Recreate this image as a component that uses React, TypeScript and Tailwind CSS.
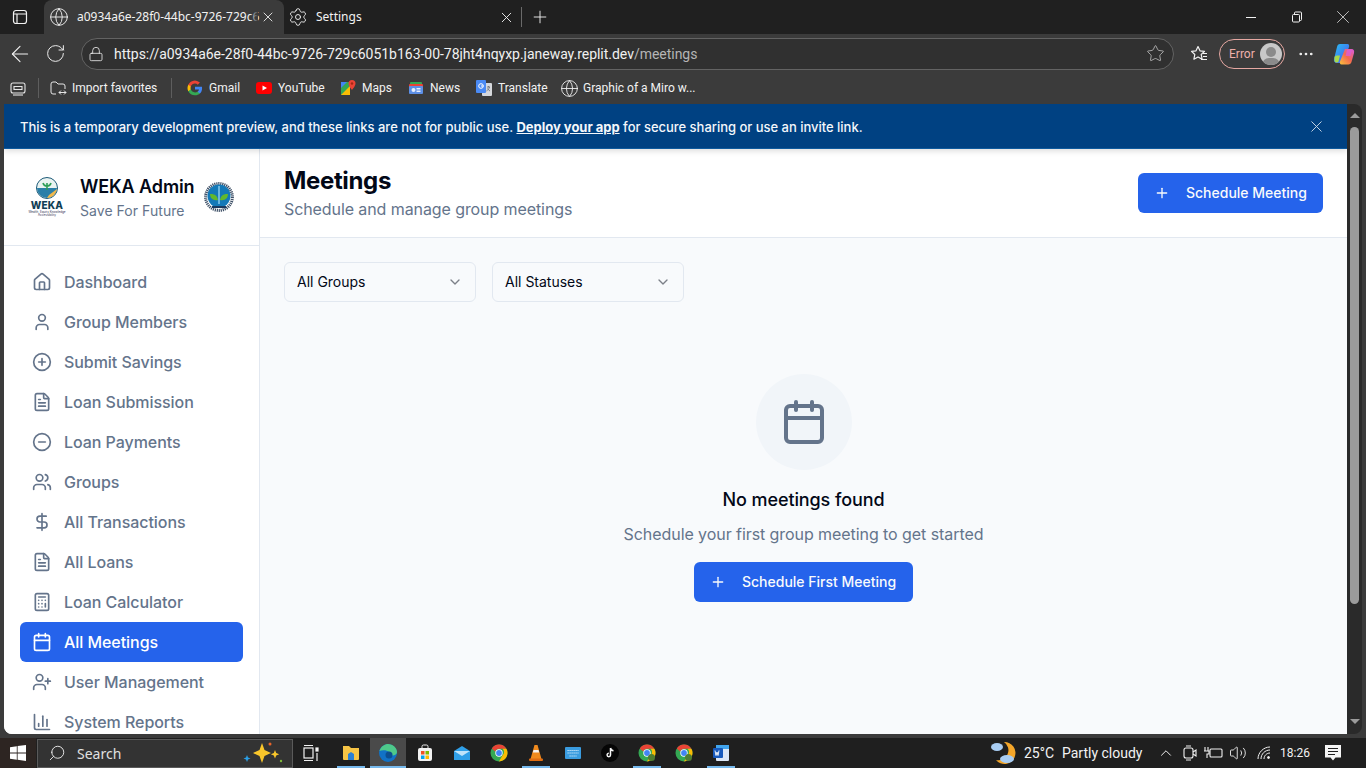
import React from 'react';
import {
  ArrowLeft, BarChart3, Calculator, Calendar, ChevronDown, ChevronUp, DollarSign, FileText, Globe, Home,
  Lock, MinusCircle, MoreHorizontal, Plus, PlusCircle, RotateCw, Search, Settings, Star, User,
  UserPlus, Users, Volume2, X,
} from 'lucide-react';

const navItems = [
  { label: 'Dashboard', icon: Home },
  { label: 'Group Members', icon: User },
  { label: 'Submit Savings', icon: PlusCircle },
  { label: 'Loan Submission', icon: FileText },
  { label: 'Loan Payments', icon: MinusCircle },
  { label: 'Groups', icon: Users },
  { label: 'All Transactions', icon: DollarSign },
  { label: 'All Loans', icon: FileText },
  { label: 'Loan Calculator', icon: Calculator },
  { label: 'All Meetings', icon: Calendar, active: true },
  { label: 'User Management', icon: UserPlus },
  { label: 'System Reports', icon: BarChart3 },
];

const GoogleIcon = () => (
  <svg width="16" height="16" viewBox="0 0 24 24">
    <path fill="#4285F4" d="M22.6 12.2c0-.8-.1-1.500-.2-2.200H12v4.200h6a5 5 0 0 1-2.200 3.300v2.800h3.600c2.100-1.900 3.200-4.800 3.200-8.100z" />
    <path fill="#34A853" d="M12 23c3 0 5.500-1 7.400-2.700l-3.600-2.800c-1 .7-2.300 1.100-3.800 1.100-2.900 0-5.400-2-6.300-4.600H2v2.900A11 11 0 0 0 12 23z" />
    <path fill="#FBBC05" d="M5.700 14a6.600 6.600 0 0 1 0-4.200V7H2a11 11 0 0 0 0 10z" />
    <path fill="#EA4335" d="M12 5.400c1.600 0 3.100.6 4.200 1.700l3.200-3.200A11 11 0 0 0 2 7l3.700 2.900C6.600 7.300 9.100 5.400 12 5.400z" />
  </svg>
);

const YouTubeIcon = () => (
  <svg width="16" height="16" viewBox="0 0 16 16">
    <rect x="0" y="2" width="16" height="12" rx="3" fill="#f00" />
    <path d="M6.500 5.500v5L11 8z" fill="#fff" />
  </svg>
);

const MapsIcon = () => (
  <svg width="16" height="16" viewBox="0 0 16 16">
    <path d="M1 2h9v13H1z" fill="#34a853" />
    <path d="M1 15l9-9v9z" fill="#fbbc04" />
    <path d="M1 2h6L1 8z" fill="#4285f4" />
    <path d="M12 0a3.500 3.500 0 0 1 3.500 3.500C15.500 6 12 10 12 10S8.500 6 8.500 3.500A3.500 3.500 0 0 1 12 0z" fill="#ea4335" />
    <circle cx="12" cy="3.500" r="1.200" fill="#a52714" />
  </svg>
);

const NewsIcon = () => (
  <svg width="16" height="16" viewBox="0 0 16 16">
    <rect x="2" y="2" width="12" height="5" rx="1" fill="#34a853" />
    <rect x="1" y="4" width="14" height="4" rx="1" fill="#ea4335" />
    <rect x="1" y="6" width="14" height="8" rx="1" fill="#5c8fe6" />
    <rect x="8.500" y="8" width="4" height="1.500" fill="#e8eefc" />
    <rect x="8.500" y="10.500" width="4" height="1.500" fill="#e8eefc" />
    <circle cx="5.500" cy="10" r="2" fill="#e8eefc" />
  </svg>
);

const TranslateIcon = () => (
  <svg width="16" height="18" viewBox="0 0 16 18">
    <rect x="6" y="4" width="10" height="13" rx="1" fill="#d5d7db" />
    <path d="M11 8h3M12.500 7v1M13.500 8c-.5 2-2 3.500-3 4M11.500 9.500c.5 1 1.500 2 2.500 2.500" stroke="#70757a" strokeWidth="0.900" fill="none" />
    <rect x="0" y="1" width="10" height="13" rx="1" fill="#4a8af4" />
    <circle cx="5" cy="7" r="2.300" fill="none" stroke="#fff" strokeWidth="1" />
    <path d="M5 7h2.400" stroke="#fff" strokeWidth="1" />
  </svg>
);

const CollectionsIcon = () => (
  <svg width="18" height="18" viewBox="0 0 18 18" fill="none" stroke="#e6e6e6" strokeWidth="1.100">
    <rect x="2" y="4" width="14" height="10" rx="2" />
    <path d="M5 7.500h8v3H5z" />
    <path d="M4 16h10" />
  </svg>
);

const ImportIcon = () => (
  <svg width="18" height="18" viewBox="0 0 18 18" fill="none" stroke="#e6e6e6" strokeWidth="1">
    <path d="M7 15H4a2 2 0 0 1-2-2V5a2 2 0 0 1 2-2h3l2 2h5a2 2 0 0 1 2 2v3" />
    <path d="M10 13.500h7M15 11.500l2 2-2 2M12 11.500l-2 2 2 2" />
  </svg>
);

const SidebarToggleIcon = () => (
  <svg width="16" height="16" viewBox="0 0 16 16" fill="none" stroke="#f2f2f2" strokeWidth="1.200">
    <rect x="1.500" y="1.500" width="13" height="13" rx="2.500" />
    <path d="M1.500 5h13M5 5v9.500" />
  </svg>
);

const FavoritesIcon = () => (
  <svg width="20" height="20" viewBox="0 0 20 20" fill="none" stroke="#f2f2f2" strokeWidth="1.200" strokeLinejoin="round">
    <path d="M9 2.500l2 4.300 4.500.6-3.300 3.100.9 4.700L9 12.900l-4.100 2.300.9-4.700L2.500 7.400 7 6.800z" />
    <path d="M14 9.500h4M14 12.500h4M12 15.500h6" />
  </svg>
);

const CopilotIcon = () => (
  <svg width="24" height="24" viewBox="0 0 24 24">
    <defs>
      <linearGradient id="copilotA" x1="0" y1="0" x2="1" y2="1">
        <stop offset="0" stopColor="#27c3f3" />
        <stop offset="0.600" stopColor="#3f7cf0" />
        <stop offset="1" stopColor="#9a5cf0" />
      </linearGradient>
      <linearGradient id="copilotB" x1="0" y1="1" x2="1" y2="0">
        <stop offset="0" stopColor="#f9c33c" />
        <stop offset="0.500" stopColor="#f4684f" />
        <stop offset="1" stopColor="#d95be0" />
      </linearGradient>
    </defs>
    <path d="M8 2h7.500c1.500 0 2 1.500 1.500 3l-4.500 13c-.6 1.800-1.700 3-3.500 3H5c-2.500 0-3.500-2-3-4L5 5c.4-1.800 1.400-3 3-3z" fill="url(#copilotA)" />
    <path d="M2.500 15.500c0-1 1-2 2.500-2h3l-1.500 6c-.5 1.500-4 1.500-4-1z" fill="#a8d84a" />
    <path d="M13 7h6.500c2.300 0 3 2 2.500 4l-2.500 9c-.5 1.500-1.500 2.500-3.200 2.500H9.500c-1.500 0-2-1.500-1.500-3z" fill="url(#copilotB)" />
    <path d="M15 8h5l-1.500 6h-5z" fill="#d95be0" opacity="0.700" />
  </svg>
);

const WekaLogo = () => (
  <div className="flex w-[36px] shrink-0 flex-col items-center">
    <svg width="22" height="22" viewBox="0 0 22 22">
      <circle cx="11" cy="11" r="10.500" fill="#eaf3f1" stroke="#1d5a78" strokeWidth="1" />
      <path d="M1 11h20a10 10 0 0 1-20 0z" fill="#2a7fa8" />
      <path d="M11 21c5 0 9-4 10-9l-8 6z" fill="#f2b84b" />
      <path d="M11 13V6M11 9C9 9 7.500 8 7 6M11 9c2 0 3.500-1 4-3" stroke="#2f9e58" strokeWidth="1.600" fill="none" />
    </svg>
    <span className="mt-[1px] font-['Inter',sans-serif] text-[10px] leading-[10px] font-extrabold tracking-[0.2px] text-[#123f55]">WEKA</span>
    <span className="mt-[1px] font-['Inter',sans-serif] text-[3px] leading-[3px] whitespace-nowrap text-[#335]">Wealth, Equity Knowledge</span>
    <span className="font-['Inter',sans-serif] text-[3px] leading-[3px] whitespace-nowrap text-[#335]">Accessibility</span>
  </div>
);

const SealLogo = () => (
  <svg width="30" height="30" viewBox="0 0 30 30" className="shrink-0">
    <circle cx="15" cy="15" r="13.400" fill="none" stroke="#3d4f66" strokeWidth="3" strokeDasharray="1.200 0.800" />
    <circle cx="15" cy="14" r="11.500" fill="#1479b8" />
    <path d="M15 4v18" stroke="#8ed0ef" strokeWidth="1.400" />
    <path d="M14 18c-.5-4.500-4-6.500-8-6 0 4.500 3.500 7 8 6z" fill="#62b82c" />
    <path d="M16 18c.5-4.500 4-6.500 8-6 0 4.500-3.500 7-8 6z" fill="#62b82c" />
    <path d="M8 25h14" stroke="#1a3a60" strokeWidth="2" />
  </svg>
);

const Bookmark = ({ icon, label, width, textMl = 'ml-[6px]' }: { icon: React.ReactNode; label: string; width: string; textMl?: string }) => (
  <div className={`flex items-center ${width}`}>
    {icon}
    <span className={`${textMl} whitespace-nowrap font-['Roboto',sans-serif] text-[12px] text-[#f2f2f2]`}>{label}</span>
  </div>
);

const TaskbarIcon = ({ children, running, active }: { children: React.ReactNode; running?: boolean; active?: boolean }) => (
  <div className={`relative flex h-[30px] w-[36px] items-center justify-center ${active ? 'bg-[#4a4a4a]' : ''}`}>
    {children}
    {running && <div className={`absolute bottom-0 h-[2px] bg-[#76b9ed] ${active ? 'inset-x-0' : 'inset-x-[4px]'}`} />}
  </div>
);

const ChromeIcon = ({ badge }: { badge?: boolean }) => (
  <svg width="18" height="18" viewBox="0 0 18 18">
    <circle cx="9" cy="9" r="8.500" fill="#34a853" />
    <path d="M9 .5a8.500 8.500 0 0 1 7.400 4.300H9a4.200 4.200 0 0 0-3.900 2.700L1.800 4.500A8.500 8.500 0 0 1 9 .5z" fill="#ea4335" />
    <path d="M16.400 4.800A8.500 8.500 0 0 1 9 17.500l3.600-6.300a4.200 4.200 0 0 0 0-6.400z" fill="#fbbc04" />
    <circle cx="9" cy="9" r="3.700" fill="#fff" />
    <circle cx="9" cy="9" r="2.900" fill="#4285f4" />
    {badge && <circle cx="13.500" cy="13.500" r="3.500" fill="#4f7d32" />}
  </svg>
);

const App: React.FC = () => {
  return (
    <div className="flex h-[768px] w-[1366px] flex-col overflow-hidden bg-[#3b3b3b] font-['Noto_Sans',sans-serif]">
      {/* tab strip */}
      <div className="flex h-[34px] shrink-0 items-center bg-[#202020] text-[#f2f2f2]">
        <div className="ml-[12px] w-[32px]"><SidebarToggleIcon /></div>
        <div className="flex h-full w-[240px] items-center rounded-t-[8px] bg-[#3b3b3b] pr-[8px] pl-[5px]">
          <Globe size={20} strokeWidth={1.1} />
          <div className="relative ml-[8px] flex w-[181px] items-center">
            <span className="text-[12px] whitespace-nowrap">a0934a6e-28f0-44bc-9726-729c6</span>
            <div className="absolute top-0 right-0 h-full w-[8px] bg-gradient-to-r from-transparent to-[#3b3b3b]" />
          </div>
          <X size={16} strokeWidth={1.3} className="ml-[2px]" />
        </div>
        <div className="flex h-full w-[238px] items-center pl-[4px]">
          <Settings size={20} strokeWidth={1.1} />
          <span className="ml-[8px] flex-1 text-[12px]">Settings</span>
          <X size={17} strokeWidth={1.3} className="-mr-[2px]" />
          <div className="ml-[8px] h-[20px] w-px bg-[#6a6a6a]" />
        </div>
        <Plus size={20} strokeWidth={1.1} className="ml-[8px]" />
        <div className="ml-auto flex items-center">
          <div className="mr-[35px] h-px w-[10px] bg-[#f2f2f2]" />
          <svg width="12" height="12" viewBox="0 0 12 12" fill="none" stroke="#f2f2f2" className="mr-[29px]">
            <rect x="1.500" y="3.500" width="7" height="7.500" rx="1" />
            <path d="M3.500 3.500V2a1 1 0 0 1 1-1h5a1 1 0 0 1 1 1v6.500a1 1 0 0 1-1 1H8.500" />
          </svg>
          <X size={22} strokeWidth={0.8} className="mr-[12px]" />
        </div>
      </div>

      {/* address bar */}
      <div className="flex h-[36px] shrink-0 items-center pt-[3px] text-[#f2f2f2]">
        <ArrowLeft size={26} strokeWidth={1} className="ml-[7px]" />
        <RotateCw size={21} strokeWidth={1.1} className="ml-[12px]" />
        <div className="ml-[15px] flex h-[32px] w-[1093px] items-center rounded-full border border-[#636363] bg-[#303030] pr-[8px] pl-[6px]">
          <Lock size={16} strokeWidth={1.2} />
          <span className="ml-[10px] flex-1 pt-px font-['Roboto',sans-serif] text-[14px] tracking-[-0.025px] whitespace-nowrap text-[#f0f0f0]">
            https://a0934a6e-28f0-44bc-9726-729c6051b163-00-78jht4nqyxp.janeway.replit.dev<span className="text-[#b5b5b5]">/meetings</span>
          </span>
          <Star size={19} strokeWidth={1} className="text-[#c4c4c4]" />
        </div>
        <div className="ml-[15px]"><FavoritesIcon /></div>
        <div className="ml-[10px] flex h-[30px] w-[66px] items-center justify-between rounded-full border border-[#e6a8a2] pr-[2px] pl-[9px]">
          <span className="font-['Roboto',sans-serif] text-[12px] text-[#eeb0aa]">Error</span>
          <div className="relative h-[22px] w-[22px] overflow-hidden rounded-full bg-[#c8c8c8]">
            <div className="absolute top-[4px] left-[6px] h-[10px] w-[10px] rounded-full bg-[#8a8a8a]" />
            <div className="absolute top-[15px] left-[2px] h-[14px] w-[18px] rounded-full bg-[#8a8a8a]" />
          </div>
        </div>
        <MoreHorizontal size={18} strokeWidth={1.6} className="ml-[12px]" />
        <div className="ml-[17px]"><CopilotIcon /></div>
      </div>

      {/* favorites bar */}
      <div className="flex h-[34px] shrink-0 items-center pt-[2px]">
        <div className="ml-[9px]"><CollectionsIcon /></div>
        <div className="ml-[11px] h-[20px] w-px bg-[#5e5e5e]" />
        <div className="ml-[10px]"><Bookmark width="w-[117px]" icon={<ImportIcon />} label="Import favorites" textMl="ml-[5px]" /></div>
        <div className="ml-[5px] h-[20px] w-px bg-[#5e5e5e]" />
        <div className="ml-[15px]"><Bookmark width="w-[69px]" icon={<GoogleIcon />} label="Gmail" /></div>
        <Bookmark width="w-[84px]" icon={<YouTubeIcon />} label="YouTube" />
        <Bookmark width="w-[68px]" icon={<MapsIcon />} label="Maps" />
        <Bookmark width="w-[68px]" icon={<NewsIcon />} label="News" />
        <Bookmark width="w-[84px]" icon={<TranslateIcon />} label="Translate" />
        <Bookmark width="w-[140px]" icon={<Globe size={19} strokeWidth={1.1} className="text-[#f2f2f2]" />} label="Graphic of a Miro w..." textMl="ml-[4px]" />
      </div>

      {/* page */}
      <div className="flex h-[630px] shrink-0 pl-[4px]">
        <div className="flex w-[1343px] flex-col overflow-hidden rounded-bl-[8px] bg-white font-['Inter',sans-serif]">
          <div className="relative z-10 flex h-[45px] shrink-0 items-center justify-between border-b border-[#0e5a9e] bg-[#004182] pr-[21px] pl-[16px] text-[13px] font-medium tracking-[-0.02px] text-[#f4f7fb] shadow-[0_2px_6px_rgba(0,0,0,0.14)]">
            <span className="pt-[3px]">
              This is a temporary development preview, and these links are not for public use.{' '}
              <span className="font-bold underline">Deploy your app</span> for secure sharing or use an invite link.
            </span>
            <X size={19} strokeWidth={1.2} className="text-[#c9d8e8]" />
          </div>

          <div className="flex min-h-0 flex-1">
            {/* sidebar */}
            <aside className="flex w-[256px] shrink-0 flex-col overflow-hidden border-r border-[#e2e8f0] bg-white">
              <div className="flex h-[97px] shrink-0 items-center border-b border-[#e2e8f0] pl-[25px]">
                <WekaLogo />
                <div className="ml-[15px] w-[124px]">
                  <div className="text-[18px] leading-[28px] font-semibold tracking-[-0.1px] whitespace-nowrap text-[#020817]">WEKA Admin</div>
                  <div className="text-[14px] leading-[20px] tracking-[0.05px] whitespace-nowrap text-[#64748b]">Save For Future</div>
                </div>
                <SealLogo />
              </div>
              <nav className="flex flex-col px-[16px] pt-[16px]">
                {navItems.map((item) => {
                  const Icon = item.icon;
                  return (
                    <div
                      key={item.label}
                      className={`flex h-[40px] shrink-0 items-center gap-[12px] rounded-[6px] px-[12px] text-[16px] font-medium tracking-[-0.05px] ${
                        item.active ? 'bg-[#2563eb] text-white' : 'text-[#64748b]'
                      }`}
                    >
                      <Icon size={20} strokeWidth={2} />
                      <span>{item.label}</span>
                    </div>
                  );
                })}
              </nav>
            </aside>

            {/* main */}
            <main className="flex min-w-0 flex-1 flex-col bg-[#f8fafc]">
              <header className="flex h-[89px] shrink-0 items-center justify-between border-b border-[#e2e8f0] bg-white px-[24px]">
                <div>
                  <h1 className="text-[24px] leading-[32px] font-bold tracking-[-0.35px] text-[#020817]">Meetings</h1>
                  <p className="text-[16px] leading-[24px] tracking-[-0.09px] text-[#64748b]">Schedule and manage group meetings</p>
                </div>
                <button className="flex h-[40px] w-[185px] items-center rounded-[6px] bg-[#2563eb] px-[16px] text-[14px] font-medium text-[#f8fafc]">
                  <Plus size={16} strokeWidth={2} />
                  <span className="ml-[16px] pb-[2px]">Schedule Meeting</span>
                </button>
              </header>

              <div className="flex flex-col px-[24px] pt-[24px]">
                <div className="flex gap-[16px]">
                  {['All Groups', 'All Statuses'].map((label) => (
                    <div key={label} className="flex h-[40px] w-[192px] items-center justify-between rounded-[6px] border border-[#e2e8f0] bg-[#f8fafc] px-[12px] text-[14px] text-[#020817]">
                      <span className="pb-[2px]">{label}</span>
                      <ChevronDown size={16} strokeWidth={2} className="text-[#020817] opacity-50" />
                    </div>
                  ))}
                </div>

                <div className="mt-[72px] flex flex-col items-center">
                  <div className="flex h-[96px] w-[96px] items-center justify-center rounded-full bg-[#f1f5f9]">
                    <Calendar size={48} strokeWidth={2} className="text-[#64748b]" />
                  </div>
                  <h3 className="mt-[16px] text-[18px] leading-[28px] font-medium tracking-[-0.1px] text-[#020817]">No meetings found</h3>
                  <p className="mt-[8px] text-[16px] leading-[24px] tracking-[-0.07px] text-[#64748b]">Schedule your first group meeting to get started</p>
                  <button className="mt-[16px] flex h-[40px] w-[219px] items-center rounded-[6px] bg-[#2563eb] px-[16px] text-[14px] font-medium text-[#f8fafc]">
                    <Plus size={16} strokeWidth={2} />
                    <span className="ml-[16px] pb-[2px]">Schedule First Meeting</span>
                  </button>
                </div>
              </div>
            </main>
          </div>
        </div>

        {/* page scrollbar */}
        <div className="flex w-[15px] shrink-0 flex-col items-center rounded-r-[8px] bg-[#2a2a2a] pt-[9px] pb-[10px]">
          <div className="h-0 w-0 border-x-[5px] border-b-[5px] border-x-transparent border-b-[#9b9b9b]" />
          <div className="mt-[9px] h-[477px] w-[9px] rounded-full bg-[#9b9b9b]" />
          <div className="mt-auto h-0 w-0 border-x-[5px] border-t-[5px] border-x-transparent border-t-[#9b9b9b]" />
        </div>
      </div>

      {/* taskbar */}
      <div className="mt-[4px] flex h-[30px] shrink-0 items-center bg-[#1f1f1f] text-[#f2f2f2]">
        <div className="flex h-full w-[36px] shrink-0 items-center justify-center bg-[#2d2522]">
          <svg width="16" height="16" viewBox="0 0 16 16" fill="#fff">
            <path d="M0 2.200l6.800-1v6.400H0zM7.600 1.100L16 0v7.600H7.600zM0 8.400h6.800v6.400l-6.800-1zM7.600 8.400H16V16l-8.400-1.200z" />
          </svg>
        </div>
        <div className="ml-px flex h-[29px] w-[256px] shrink-0 items-center border border-[#5a5a5a] bg-[#333333] pl-[10px]">
          <Search size={18} strokeWidth={1.2} className="-scale-x-100" />
          <span className="ml-[11px] text-[14px] text-[#e0e0e0]">Search</span>
          <svg width="46" height="24" viewBox="0 0 46 24" className="mr-[4px] ml-auto">
            <path d="M20 2l2.500 7 6.500 3-6.500 3L20 22l-2.500-7-6.500-3 6.500-3z" fill="#f9c62b" />
            <path d="M33 9l1.200 3 3 1.200-3 1.200-1.200 3-1.200-3-3-1.200 3-1.200z" fill="#f9c62b" />
            <path d="M5 14l1 2.500 2.500 1-2.500 1-1 2.500-1-2.500-2.500-1 2.500-1z" fill="#2a9fe6" />
            <circle cx="28" cy="3" r="1.500" fill="#e8642a" />
            <circle cx="39" cy="20" r="1.200" fill="#7fba3a" />
          </svg>
        </div>
        <div className="flex shrink-0 items-center">
          <TaskbarIcon>
            <svg width="16" height="18" viewBox="0 0 16 18" fill="none" stroke="#f2f2f2" strokeWidth="1.200">
              <rect x="1" y="4" width="9" height="10" />
              <path d="M1 1.500h9M1 16.500h9" />
              <rect x="13" y="4" width="2" height="3" fill="#f2f2f2" />
              <path d="M14 9v8" />
            </svg>
          </TaskbarIcon>
          <div className="w-[4px]" />
          <TaskbarIcon running>
            <svg width="18" height="16" viewBox="0 0 18 16">
              <path d="M1 1h6l2 2h8v11a1 1 0 0 1-1 1H2a1 1 0 0 1-1-1z" fill="#f6c445" />
              <path d="M6 9l3-2 3 2v6H6z" fill="#2a7fd4" />
            </svg>
          </TaskbarIcon>
          <div className="w-[1px]" />
          <TaskbarIcon running active>
            <svg width="20" height="20" viewBox="0 0 20 20">
              <circle cx="10" cy="10" r="9" fill="#1172c6" />
              <path d="M1.500 8C3 3 7 1 10 1c5 0 9 4 9 8 0 2-2 3.500-4.500 3.500S10.500 11 11 9c-2-2-7-2-9.500-1z" fill="#4ec98a" />
              <circle cx="11" cy="12" r="3.500" fill="#0c4f91" />
            </svg>
          </TaskbarIcon>
          <div className="w-[1px]" />
          <TaskbarIcon>
            <svg width="16" height="18" viewBox="0 0 16 18">
              <path d="M5 4V2.500A1.500 1.500 0 0 1 6.500 1h3A1.500 1.500 0 0 1 11 2.500V4" fill="none" stroke="#ededed" />
              <rect x="1" y="4" width="14" height="13" rx="2" fill="#f2f2f2" />
              <rect x="4" y="7" width="3.500" height="3.500" fill="#f25022" />
              <rect x="8.500" y="7" width="3.500" height="3.500" fill="#7fba00" />
              <rect x="4" y="11.500" width="3.500" height="3.500" fill="#00a4ef" />
              <rect x="8.500" y="11.500" width="3.500" height="3.500" fill="#ffb900" />
            </svg>
          </TaskbarIcon>
          <div className="w-[1px]" />
          <TaskbarIcon>
            <svg width="18" height="16" viewBox="0 0 18 16">
              <path d="M1 6l8-5 8 5v9H1z" fill="#2f9fe8" />
              <path d="M1 6l8 5 8-5" fill="#bfe3fa" />
            </svg>
          </TaskbarIcon>
          <div className="w-[1px]" />
          <TaskbarIcon><ChromeIcon /></TaskbarIcon>
          <div className="w-[1px]" />
          <TaskbarIcon running>
            <svg width="16" height="18" viewBox="0 0 16 18">
              <path d="M6.500 1h3l4 14h-11z" fill="#f08a1d" />
              <path d="M5.500 6h5l.7 2.500H4.800z" fill="#f4f4f4" />
              <rect x="1" y="14.500" width="14" height="2.500" rx="1" fill="#e06d12" />
            </svg>
          </TaskbarIcon>
          <div className="w-[1px]" />
          <TaskbarIcon>
            <svg width="18" height="14" viewBox="0 0 18 14">
              <rect x="1" y="1" width="16" height="12" rx="1" fill="#3a9ce0" />
              <path d="M3.500 4.500h11M3.500 7h11M5.500 10h7" stroke="#d8eefc" strokeWidth="1.200" strokeDasharray="1.200 .8" />
            </svg>
          </TaskbarIcon>
          <div className="w-[1px]" />
          <TaskbarIcon>
            <svg width="18" height="18" viewBox="0 0 18 18">
              <circle cx="9" cy="9" r="9" fill="#050505" />
              <path d="M9.500 4v7a1.700 1.700 0 1 1-1.700-1.700M9.500 4c.3 1.600 1.300 2.500 3 2.700" fill="none" stroke="#f5f5f5" strokeWidth="1.500" />
            </svg>
          </TaskbarIcon>
          <div className="w-[1px]" />
          <TaskbarIcon running><ChromeIcon badge /></TaskbarIcon>
          <div className="w-[1px]" />
          <TaskbarIcon><ChromeIcon badge /></TaskbarIcon>
          <div className="w-[1px]" />
          <TaskbarIcon running>
            <svg width="18" height="18" viewBox="0 0 18 18">
              <rect x="4" y="1" width="13" height="16" rx="1" fill="#dbe7f7" />
              <path d="M4 1h13v4H4z" fill="#41a5ee" />
              <rect x="1" y="4" width="10" height="10" rx="1" fill="#185abd" />
              <path d="M3 6.500l1 5 1-3.500 1 3.500 1-5" fill="none" stroke="#fff" strokeWidth="0.900" />
            </svg>
          </TaskbarIcon>
        </div>

        <div className="mr-[25px] ml-auto flex shrink-0 items-center">
          <svg width="26" height="26" viewBox="0 0 26 26">
            <path d="M14 2a11 11 0 1 1-8 18 10 10 0 0 0 8-18z" fill="#f4a62a" />
            <ellipse cx="7" cy="7" rx="6" ry="4" fill="#a9cdf3" />
            <ellipse cx="17" cy="19" rx="7" ry="4" fill="#a9cdf3" />
          </svg>
          <span className="ml-[8px] w-[30px] font-['Roboto',sans-serif] text-[14px] whitespace-nowrap text-[#f2f2f2]">25°C</span>
          <span className="ml-[8px] w-[78px] font-['Roboto',sans-serif] text-[14px] whitespace-nowrap text-[#f2f2f2]">Partly cloudy</span>
          <ChevronUp size={18} strokeWidth={1.3} className="ml-[17px]" />
          <svg width="16" height="18" viewBox="0 0 16 18" fill="none" stroke="#f2f2f2" strokeWidth="1.100" className="ml-[7px]">
            <rect x="2" y="4" width="9" height="10" rx="2" />
            <path d="M11 8l3-2v6l-3-2M4 2h5M4 16h5" />
          </svg>
          <svg width="20" height="16" viewBox="0 0 20 16" fill="none" stroke="#f2f2f2" strokeWidth="1.100" className="ml-[6px]">
            <rect x="6" y="4" width="12" height="8" rx="1" />
            <path d="M4 2v4M1 2v4M0 6h5v3H3v4" />
          </svg>
          <Volume2 size={18} strokeWidth={1.2} className="ml-[5px]" />
          <svg width="14" height="14" viewBox="0 0 14 14" fill="none" stroke="#f2f2f2" strokeWidth="1" className="ml-[10px]">
            <path d="M1 13C1 6.500 6.500 1 13 1M4 13c0-5 4-9 9-9M7 13c0-3.300 2.700-6 6-6" />
            <circle cx="11.500" cy="11.500" r="1" fill="#f2f2f2" />
          </svg>
          <span className="ml-[9px] w-[29px] font-['Roboto',sans-serif] text-[12px] whitespace-nowrap text-[#f2f2f2]">18:26</span>
          <svg width="16" height="16" viewBox="0 0 16 16" className="ml-[16px]">
            <path d="M0 0h16v12.500h-5.500L8 15.500l-2.500-3H0z" fill="#f5f5f5" />
            <path d="M3 3.500h10M3 6.500h10M3 9.500h7" stroke="#1f1f1f" strokeWidth="1" />
          </svg>
        </div>
      </div>
    </div>
  );
};

export default App;
